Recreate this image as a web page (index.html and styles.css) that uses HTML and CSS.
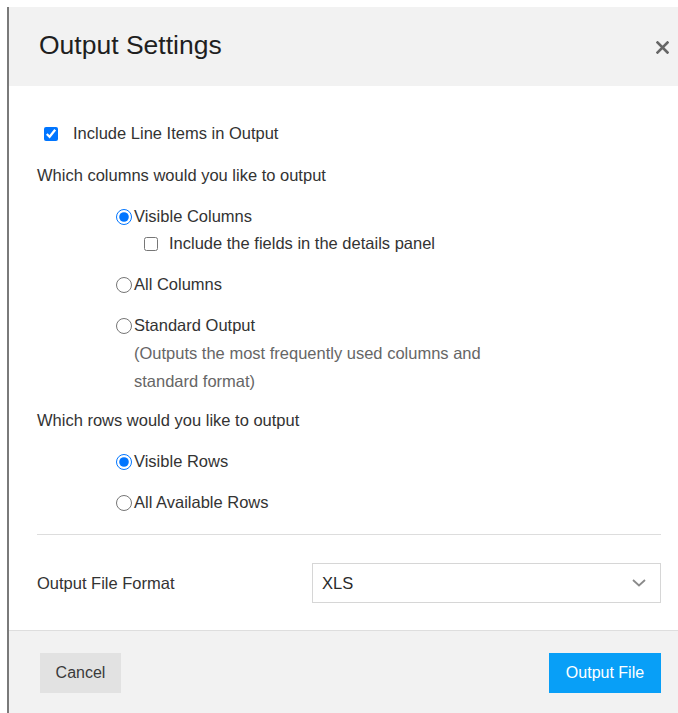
FILE: index.html
```html
<!DOCTYPE html>
<html lang="en">
<head>
<meta charset="utf-8">
<title>Output Settings</title>
<link rel="stylesheet" href="styles.css">
</head>
<body>
<div class="dialog">
  <header class="dialog-header">
    <h1 class="dialog-title">Output Settings</h1>
    <button class="close-btn" type="button" aria-label="Close">
      <svg width="13" height="13" viewBox="0 0 13 13" aria-hidden="true">
        <path d="M1.5 1.5l10 10M11.5 1.5l-10 10" stroke="#666666" stroke-width="2.6" stroke-linecap="square"/>
      </svg>
    </button>
  </header>

  <div class="dialog-body">
    <label class="row check-row">
      <input type="checkbox" class="check" checked>
      <span>Include Line Items in Output</span>
    </label>

    <div class="row question">Which columns would you like to output</div>

    <div class="options">
      <label class="row radio-row">
        <input type="radio" name="cols" class="radio" checked>
        <span>Visible Columns</span>
      </label>
      <label class="row sub-row">
        <input type="checkbox" class="check">
        <span>Include the fields in the details panel</span>
      </label>
      <label class="row radio-row spaced">
        <input type="radio" name="cols" class="radio">
        <span>All Columns</span>
      </label>
      <label class="row radio-row spaced">
        <input type="radio" name="cols" class="radio">
        <span>Standard Output</span>
      </label>
      <p class="note">(Outputs the most frequently used columns and<br>standard format)</p>
    </div>

    <div class="row question rows-q">Which rows would you like to output</div>

    <div class="options">
      <label class="row radio-row">
        <input type="radio" name="rows" class="radio" checked>
        <span>Visible Rows</span>
      </label>
      <label class="row radio-row spaced">
        <input type="radio" name="rows" class="radio">
        <span>All Available Rows</span>
      </label>
    </div>

    <hr class="divider">

    <div class="format-row">
      <span class="format-label">Output File Format</span>
      <div class="select">
        <span>XLS</span>
        <svg class="chevron" width="14" height="8" viewBox="0 0 14 8" aria-hidden="true">
          <path d="M1 1l6 5.5L13 1" fill="none" stroke="#8a8a8a" stroke-width="1.8"/>
        </svg>
      </div>
    </div>
  </div>

  <footer class="dialog-footer">
    <button class="btn btn-cancel" type="button">Cancel</button>
    <button class="btn btn-primary" type="button">Output File</button>
  </footer>
</div>
</body>
</html>
```

FILE: styles.css
```css
* {
  box-sizing: border-box;
}

html, body {
  margin: 0;
  padding: 0;
  background: #ffffff;
}

body {
  padding-top: 7px;
  padding-left: 7px;
  font-family: "Liberation Sans", Arial, sans-serif;
  font-size: 16.5px;
  color: #333333;
  height: 713px;
  overflow: hidden;
}

.dialog {
  border-left: 2px solid #7a7a7a;
  height: 706px;
  display: flex;
  flex-direction: column;
  background: #ffffff;
}

/* header */
.dialog-header {
  height: 79px;
  flex-shrink: 0;
  background: #f2f2f2;
  display: flex;
  align-items: center;
  justify-content: space-between;
  padding: 0 9px 0 30px;
}

.dialog-title {
  margin: 0;
  font-weight: normal;
  font-size: 26.5px;
  color: #1f1f1f;
  position: relative;
  top: -1px;
}

.close-btn {
  border: 0;
  background: transparent;
  padding: 0;
  width: 13px;
  height: 13px;
  display: flex;
  position: relative;
  top: 1px;
}

/* body */
.dialog-body {
  padding: 34px 17px 0 28px;
  flex: 1;
}

.row {
  display: flex;
  align-items: center;
  height: 27px;
  line-height: 27px;
}

.check-row .check {
  margin: 0 15px 0 7px;
}

.question {
  margin-top: 15px;
}

.rows-q {
  margin-top: 12px;
}

.options {
  padding-left: 79px;
  margin-top: 14px;
}

.spaced {
  margin-top: 14px;
}

.radio {
  width: 16px;
  height: 16px;
  margin: 0 2px 0 0;
  accent-color: #0075ff;
}

.check {
  width: 14px;
  height: 14px;
  margin: 0;
  accent-color: #0075ff;
}

.sub-row {
  padding-left: 28px;
}

.sub-row .check {
  margin-right: 11px;
}

.note {
  margin: 1px 0 0;
  padding-left: 18px;
  color: #666666;
  line-height: 27.5px;
}

.divider {
  border: 0;
  border-top: 1px solid #dddddd;
  margin: 18px 0 0;
}

.format-row {
  display: flex;
  align-items: center;
  margin-top: 28px;
}

.format-label {
  width: 275px;
}

.select {
  flex: 1;
  height: 40px;
  border: 1px solid #d6d6d6;
  display: flex;
  align-items: center;
  justify-content: space-between;
  padding: 0 14px 0 9px;
  color: #2a2a2a;
}

/* footer */
.dialog-footer {
  height: 83px;
  flex-shrink: 0;
  background: #f2f2f2;
  border-top: 1px solid #dedede;
  display: flex;
  align-items: flex-start;
  justify-content: space-between;
  padding: 22px 17px 0 31px;
}

.btn {
  border: 0;
  height: 40px;
  font-family: "Liberation Sans", Arial, sans-serif;
  font-size: 16px;
  padding: 0;
}

.btn-cancel {
  width: 81px;
  background: #e2e2e2;
  color: #3a3a3a;
}

.btn-primary {
  width: 112px;
  background: #089ff7;
  color: #ffffff;
}
```
